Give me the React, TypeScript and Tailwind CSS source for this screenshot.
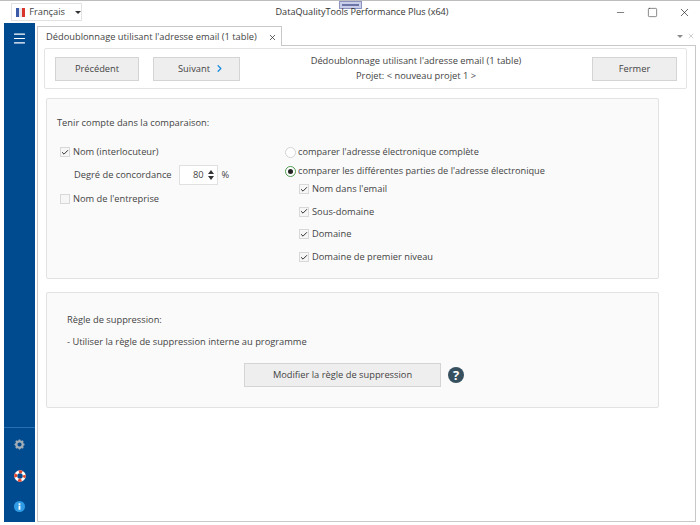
import React from 'react';
import { Menu, X, Minus, Square, ChevronRight, Check } from 'lucide-react';

const Btn = ({ className, children }: { className: string; children: React.ReactNode }) => (
  <button className={`h-[24px] flex items-center justify-center gap-[5px] bg-[#eeeeee] border border-[#d4d4d4] text-[9.3px] text-[#444444] ${className}`}>
    {children}
  </button>
);

const CheckBox = ({ label, checked = true }: { label: string; checked?: boolean }) => (
  <div className="flex items-center gap-[3px] h-[14px]">
    <span className="w-[10px] h-[10px] flex items-center justify-center bg-[#f6f6f6] border border-[#d8d8d8]">
      {checked && <Check size={9} strokeWidth={3} className="text-[#333333]" />}
    </span>
    <span>{label}</span>
  </div>
);

const Radio = ({ label, checked = false }: { label: string; checked?: boolean }) => (
  <div className="flex items-center gap-[2px] h-[14px]">
    <span className={`w-[11px] h-[11px] rounded-full flex items-center justify-center bg-white border ${checked ? 'border-[#4f9a4f]' : 'border-[#d4d4d4]'}`}>
      {checked && <span className="w-[5px] h-[5px] rounded-full bg-[#222222]" />}
    </span>
    <span className="text-[9.2px]">{label}</span>
  </div>
);

const Gear = () => (
  <svg width="11" height="11" viewBox="0 0 24 24">
    <circle cx="12" cy="12" r="7" fill="none" stroke="#a3adb5" strokeWidth="5" />
    <path d="M12 1v5M12 18v5M1 12h5M18 12h5M4 4l3.500 3.500M16.500 16.500 20 20M20 4l-3.500 3.500M7.500 16.500 4 20" stroke="#a3adb5" strokeWidth="3.500" />
  </svg>
);

const Lifebuoy = () => (
  <svg width="12" height="12" viewBox="0 0 24 24">
    <circle cx="12" cy="12" r="8.500" fill="none" stroke="#ffffff" strokeWidth="6" />
    <circle cx="12" cy="12" r="8.500" fill="none" stroke="#e2492f" strokeWidth="6" strokeDasharray="6.700 6.650" strokeDashoffset="3.300" />
  </svg>
);

const Info = () => (
  <svg width="11" height="11" viewBox="0 0 24 24">
    <circle cx="12" cy="12" r="12" fill="#2f9be4" />
    <rect x="10" y="10" width="4" height="9" fill="#ffffff" />
    <rect x="10" y="5" width="4" height="3.500" fill="#ffffff" />
  </svg>
);

const Flag = () => (
  <span className="flex w-[12px] h-[9px]">
    <span className="flex-1 bg-[#3b5aa8]" />
    <span className="flex-1 bg-[#e8e8ee]" />
    <span className="flex-1 bg-[#d8352c]" />
  </span>
);

export default function App() {
  return (
    <div className="relative w-[700px] h-[525px] flex flex-col bg-white border-t border-[#bdbdbd] font-['Open_Sans',sans-serif] text-[9.3px] text-[#444444] overflow-hidden">
      {/* small window thumbnail sticking out of the title bar */}
      <div className="absolute left-[339px] top-0 w-[23px] h-[8px] bg-[#c9cfe8] border border-[#8d93c0] flex items-center justify-center">
        <span className="w-[17px] h-[2px] bg-[#6d74a8]" />
      </div>

      <div className="h-[22px] flex items-center pl-[11px] shrink-0">
        <div className="w-[71px] h-[18px] flex items-center pl-[4px] gap-[4px] border border-[#e2e2e2]">
          <Flag />
          <span>Français</span>
          <span className="ml-[6px] w-0 h-0 border-x-[3px] border-x-transparent border-t-[3px] border-t-[#333333]" />
        </div>
        <div className="absolute left-[12px] w-[700px] text-center text-[9.100px] text-[#333333] pointer-events-none">
          DataQualityTools Performance Plus (x64)
        </div>
        <div className="ml-auto flex items-center">
          <div className="w-[32px] flex justify-center"><Minus size={11} strokeWidth={1.250} className="text-[#222222]" /></div>
          <div className="w-[32px] flex justify-center"><Square size={11} strokeWidth={1.250} className="text-[#333333]" /></div>
          <div className="w-[32px] flex justify-center"><X size={13} strokeWidth={1.250} className="text-[#222222]" /></div>
        </div>
      </div>

      <div className="flex flex-1 min-h-0 pl-[4px] pr-[4px] pb-[3px]">
        <div className="w-[31px] shrink-0 flex flex-col bg-[#004b90] items-center">
          <div className="h-[31px] flex items-center justify-center text-white">
            <Menu size={15} strokeWidth={1.750} />
          </div>
          <div className="mt-auto w-full border-t border-[#2a6fb0] flex flex-col items-center pt-[11px] pb-[10px] gap-[19.500px]">
            <Gear />
            <Lifebuoy />
            <Info />
          </div>
        </div>

        <div className="flex-1 flex flex-col min-w-0 pl-[2px]">
          <div className="h-[21px] mt-[1px] flex items-end shrink-0 relative">
            <div className="w-[245px] h-[20px] -mb-[1px] relative z-10 flex items-center pl-[8px] bg-white border border-b-0 border-[#c8c8c8] whitespace-nowrap">
              <span>Dédoublonnage utilisant l'adresse email (1 table)</span>
              <X size={9} strokeWidth={2} className="absolute right-[4px] top-[6px] text-[#333333]" />
            </div>
            <div className="ml-auto flex items-center gap-[4px] pb-[5px] pr-[1px] text-[#9a9a9a]">
              <span className="w-0 h-0 border-x-[3px] border-x-transparent border-t-[3px] border-t-[#8a8a8a]" />
              <X size={8} strokeWidth={1.500} />
            </div>
          </div>

          <div className="flex-1 border border-[#c8c8c8] pl-[6px] pr-[6px] pt-[2px]">
            <div className="h-[41px] w-[643px] flex items-center pl-[10px] pr-[9px] border border-[#e4e4e4] rounded-[2px]">
              <Btn className="w-[84px]">Précédent</Btn>
              <Btn className="w-[87px] ml-[14px] pl-[10px]">
                Suivant
                <ChevronRight size={11} strokeWidth={3} className="text-[#1e90e0] -ml-[1px]" />
              </Btn>
              <div className="flex-1 flex flex-col items-center gap-[3px] leading-[12px]">
                <span>Dédoublonnage utilisant l'adresse email (1 table)</span>
                <span>Projet: &lt; nouveau projet 1 &gt;</span>
              </div>
              <Btn className="w-[85px]">Fermer</Btn>
            </div>

            <div className="ml-[2px] mt-[9px] w-[613px] h-[181px] bg-[#fafafa] border border-[#e2e2e2] rounded-[2px] pl-[10px] pt-[17px]">
              <div className="leading-[14px]">Tenir compte dans la comparaison:</div>
              <div className="flex mt-[15px]">
                <div className="w-[228px] shrink-0 pl-[3px] flex flex-col">
                  <CheckBox label="Nom (interlocuteur)" />
                  <div className="flex items-center mt-[5px] h-[21px] pl-[14px]">
                    <span>Degré de concordance</span>
                    <div className="ml-[7px] w-[39px] h-[20px] flex items-center justify-end bg-white border border-[#e0e0e0] pr-[3px]">
                      <span>80</span>
                      <div className="ml-[4px] flex flex-col items-center gap-[2px]">
                        <span className="w-0 h-0 border-x-[3px] border-x-transparent border-b-[4px] border-b-[#333333]" />
                        <span className="w-0 h-0 border-x-[3px] border-x-transparent border-t-[4px] border-t-[#333333]" />
                      </div>
                    </div>
                    <span className="ml-[4px]">%</span>
                  </div>
                  <div className="mt-[7px]">
                    <CheckBox label="Nom de l'entreprise" checked={false} />
                  </div>
                </div>
                <div className="flex flex-col">
                  <Radio label="comparer l'adresse électronique complète" />
                  <div className="mt-[5px]">
                    <Radio label="comparer les différentes parties de l'adresse électronique" checked />
                  </div>
                  <div className="pl-[14px] mt-[4px] flex flex-col gap-[8.700px]">
                    <CheckBox label="Nom dans l'email" />
                    <CheckBox label="Sous-domaine" />
                    <CheckBox label="Domaine" />
                    <CheckBox label="Domaine de premier niveau" />
                  </div>
                </div>
              </div>
            </div>

            <div className="ml-[2px] mt-[13px] w-[613px] h-[116px] bg-[#fafafa] border border-[#e2e2e2] rounded-[2px] pl-[20px] pt-[20px]">
              <div className="leading-[14px]">Règle de suppression:</div>
              <div className="leading-[14px] mt-[8px]">- Utiliser la règle de suppression interne au programme</div>
              <div className="flex items-center mt-[14px] pl-[177px]">
                <Btn className="w-[197px]">Modifier la règle de suppression</Btn>
                <span className="ml-[7px] w-[16px] h-[16px] rounded-full bg-[#37505f] text-white flex items-center justify-center text-[13px] font-bold leading-none">?</span>
              </div>
            </div>
          </div>
        </div>
      </div>
    </div>
  );
}
